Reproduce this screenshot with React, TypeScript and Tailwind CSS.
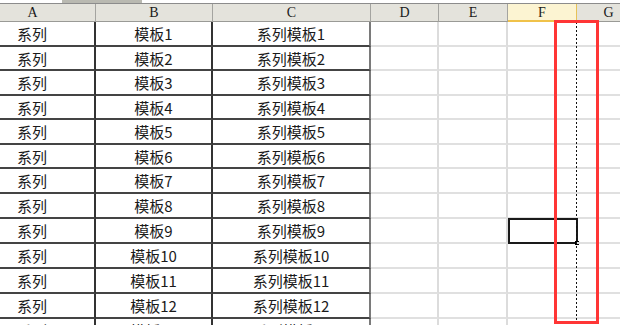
import React from 'react';

const cols = [
  { key: 'A', w: 'w-[126px]' },
  { key: 'B', w: 'w-[117px]' },
  { key: 'C', w: 'w-[158px]' },
  { key: 'D', w: 'w-[68px]' },
  { key: 'E', w: 'w-[69px]' },
  { key: 'F', w: 'w-[69px]' },
  { key: 'G', w: 'w-[64px]' },
];

// row heights in the sheet are not all equal (zoom level rounding)
const rowHeights = [25, 24, 25, 24, 25, 24, 25, 25, 25, 25, 25, 25, 25];

const cellText = (col: string, n: number) => {
  if (col === 'A') return '系列';
  if (col === 'B') return `模板${n}`;
  if (col === 'C') return `系列模板${n}`;
  return '';
};

const App: React.FC = () => {
  return (
    <div
      className="relative w-[620px] h-[325px] overflow-hidden bg-white text-[#1a1a1a]"
      style={{ fontFamily: '"Noto Sans CJK SC", "Liberation Sans", sans-serif' }}
    >
      {/* scrollbar strip */}
      <div className="h-[4px] bg-white border-b border-[#8c8c8c]">
        <div className="ml-[62px] w-[80px] h-[3px] bg-[#b9b9b1]" />
      </div>

      <div className="-ml-[30px]">
        {/* column headers */}
        <div className="flex h-[18px]">
          {cols.map((c) => (
            <div
              key={c.key}
              className={`${c.w} shrink-0 flex items-center justify-center pt-[1px] text-[14px] leading-none ${
                c.key === 'F'
                  ? 'bg-[#fcf4d2] border-r border-r-[#e6c258] border-b-2 border-b-[#f0c24a]'
                  : 'bg-[#e4e3dc] border-r border-r-[#a4a4a0] border-b border-b-[#9a9a96]'
              }`}
              style={{ fontFamily: '"Liberation Serif", "DejaVu Serif", serif' }}
            >
              {c.key}
            </div>
          ))}
        </div>

        {/* rows */}
        {rowHeights.map((h, i) => {
          const n = i + 1;
          return (
            <div key={n} className={`flex ${h === 25 ? 'h-[25px]' : 'h-[24px]'}`}>
              {cols.map((c) => {
                const inTable = c.key === 'A' || c.key === 'B' || c.key === 'C';
                let border = 'border-r-2 border-r-[#dcdcdc] border-b-2 border-b-[#e0e0e0]';
                if (c.key === 'A' || c.key === 'B') border = 'border-r-2 border-r-[#333] border-b-2 border-b-[#444]';
                if (c.key === 'C') border = 'border-r-2 border-r-[#7a7a7a] border-b-2 border-b-[#444]';
                if (c.key === 'F') border = 'border-b-2 border-b-[#e0e0e0]';
                return (
                  <div
                    key={c.key}
                    className={`${c.w} shrink-0 relative flex items-center justify-center text-[15px] leading-none ${border}`}
                  >
                    {inTable ? cellText(c.key, n) : null}
                    {c.key === 'F' && n === 9 && (
                      <div className="absolute -top-[1px] left-0 w-[70px] h-[26px] border-2 border-[#1a1a1a]">
                        <div className="absolute -right-[3px] -bottom-[3px] w-[4px] h-[4px] bg-white border border-black" />
                      </div>
                    )}
                  </div>
                );
              })}
            </div>
          );
        })}
      </div>

      {/* page break line */}
      <div className="absolute left-[576px] top-[22px] w-[1px] h-[303px] bg-[repeating-linear-gradient(to_bottom,#111_0_2px,transparent_2px_4px)]" />

      {/* red highlight */}
      <div className="absolute left-[554px] top-[20px] w-[45px] h-[304px] border-[3px] border-[#ff3535]" />
    </div>
  );
};

export default App;
